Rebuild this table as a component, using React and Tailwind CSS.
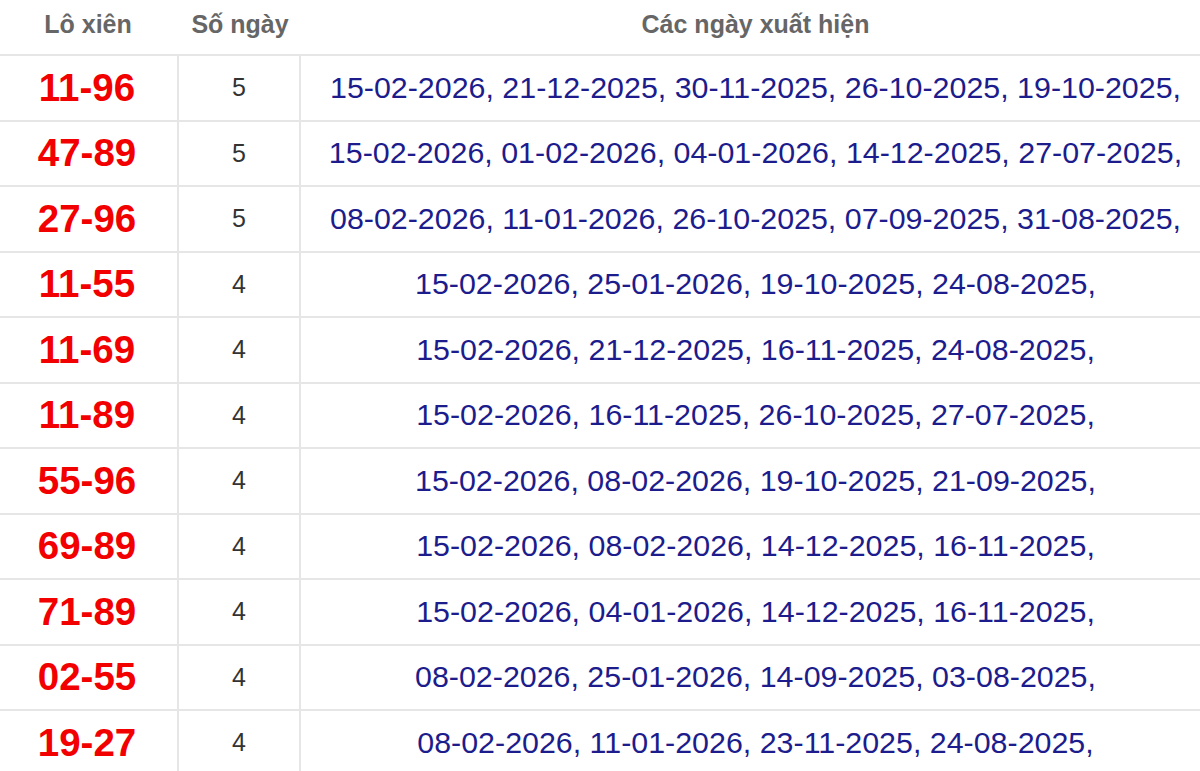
import React from "react";

const rows = [
  ["11-96", 5, "15-02-2026, 21-12-2025, 30-11-2025, 26-10-2025, 19-10-2025,"],
  ["47-89", 5, "15-02-2026, 01-02-2026, 04-01-2026, 14-12-2025, 27-07-2025,"],
  ["27-96", 5, "08-02-2026, 11-01-2026, 26-10-2025, 07-09-2025, 31-08-2025,"],
  ["11-55", 4, "15-02-2026, 25-01-2026, 19-10-2025, 24-08-2025,"],
  ["11-69", 4, "15-02-2026, 21-12-2025, 16-11-2025, 24-08-2025,"],
  ["11-89", 4, "15-02-2026, 16-11-2025, 26-10-2025, 27-07-2025,"],
  ["55-96", 4, "15-02-2026, 08-02-2026, 19-10-2025, 21-09-2025,"],
  ["69-89", 4, "15-02-2026, 08-02-2026, 14-12-2025, 16-11-2025,"],
  ["71-89", 4, "15-02-2026, 04-01-2026, 14-12-2025, 16-11-2025,"],
  ["02-55", 4, "08-02-2026, 25-01-2026, 14-09-2025, 03-08-2025,"],
  ["19-27", 4, "08-02-2026, 11-01-2026, 23-11-2025, 24-08-2025,"],
];

export default function App() {
  return (
    <div className="w-[1200px] h-[771px] overflow-hidden bg-white font-['Liberation_Sans',Arial,sans-serif]">
      <div className="flex h-[56px] border-b-2 border-[#e6e6e6] text-[25px] font-bold text-[#666666]">
        <div className="w-[179px] flex items-center justify-center pb-[5px] pr-[3px]">Lô xiên</div>
        <div className="w-[122px] flex items-center justify-center pb-[5px]">Số ngày</div>
        <div className="flex-1 flex items-center justify-center pb-[5px] pl-[10px]">Các ngày xuất hiện</div>
      </div>
      {rows.map(([pair, n, dates]) => (
        <div key={pair} className="flex h-[65.5px] border-b-2 border-[#e6e6e6]">
          <div className="w-[179px] shrink-0 border-r-2 border-[#e6e6e6] flex items-center justify-center pr-[3px] text-[38.5px] font-bold text-[#f20000]">
            {pair}
          </div>
          <div className="w-[122px] shrink-0 border-r-2 border-[#e6e6e6] flex items-center justify-center text-[25px] text-[#333333]">
            {n}
          </div>
          <div className="flex-1 flex items-center justify-center pl-[10px] text-[30.4px] text-[#1c1c8c] whitespace-nowrap">
            {dates}
          </div>
        </div>
      ))}
    </div>
  );
}
